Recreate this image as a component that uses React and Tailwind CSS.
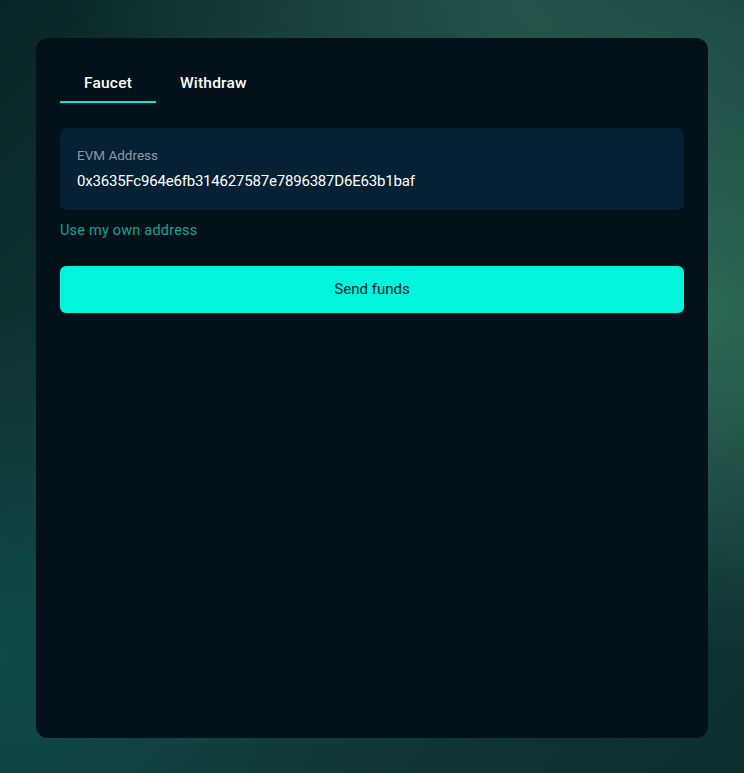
import React, { useState } from 'react';

const ADDRESS = '0x3635Fc964e6fb314627587e7896387D6E63b1baf';

const Tabs = ({ active, onChange }) => {
  const tabs = ['Faucet', 'Withdraw'];
  return (
    <div className="flex">
      {tabs.map((t) => (
        <button
          key={t}
          onClick={() => onChange(t)}
          className={
            'px-6 pt-[11px] pb-[8px] text-[15.5px] font-medium leading-[20px] tracking-[0.2px] border-b-2 ' +
            (active === t ? 'text-white border-[#0ae8d6]' : 'text-white border-transparent')
          }
        >
          {t}
        </button>
      ))}
    </div>
  );
};

const App = () => {
  const [tab, setTab] = useState('Faucet');

  return (
    <div
      className="min-h-[773px] w-full flex justify-center pt-[38px] pb-[35px] px-[36px] bg-[#0c2c2e]"
      style={{
        fontFamily: 'Roboto, "Noto Sans", sans-serif',
        backgroundImage:
          'radial-gradient(ellipse 60% 45% at 95% 40%, #2d6a57 0%, rgba(45,106,87,0) 100%), radial-gradient(ellipse 55% 45% at 0% 85%, #0d4a48 0%, rgba(13,74,72,0) 100%), radial-gradient(ellipse 60% 40% at 70% 0%, #22544a 0%, rgba(34,84,74,0) 100%), linear-gradient(135deg, #0a2527 0%, #143c3a 50%, #0c2e30 100%)',
      }}
    >
      <div className="w-full h-[700px] bg-[#03111b] rounded-xl px-6 pt-6">
        <Tabs active={tab} onChange={setTab} />

        <div className="mt-[25px] bg-[#062034] rounded-md px-[17px] pt-[17px] pb-[19px]">
          <div className="text-[13.5px] leading-[20px] text-[#8d98a2]">EVM Address</div>
          <div className="mt-[6px] text-[15px] leading-[20px] text-white tracking-[-0.2px]">{ADDRESS}</div>
        </div>

        <button className="mt-[11px] text-[14.5px] leading-[20px] text-[#17a38e] tracking-[0.2px]">Use my own address</button>

        <button className="mt-[24px] w-full h-[47px] rounded-md bg-[#00f5dc] text-[15px] text-[#06232a]">
          Send funds
        </button>
      </div>
    </div>
  );
};

export default App;
